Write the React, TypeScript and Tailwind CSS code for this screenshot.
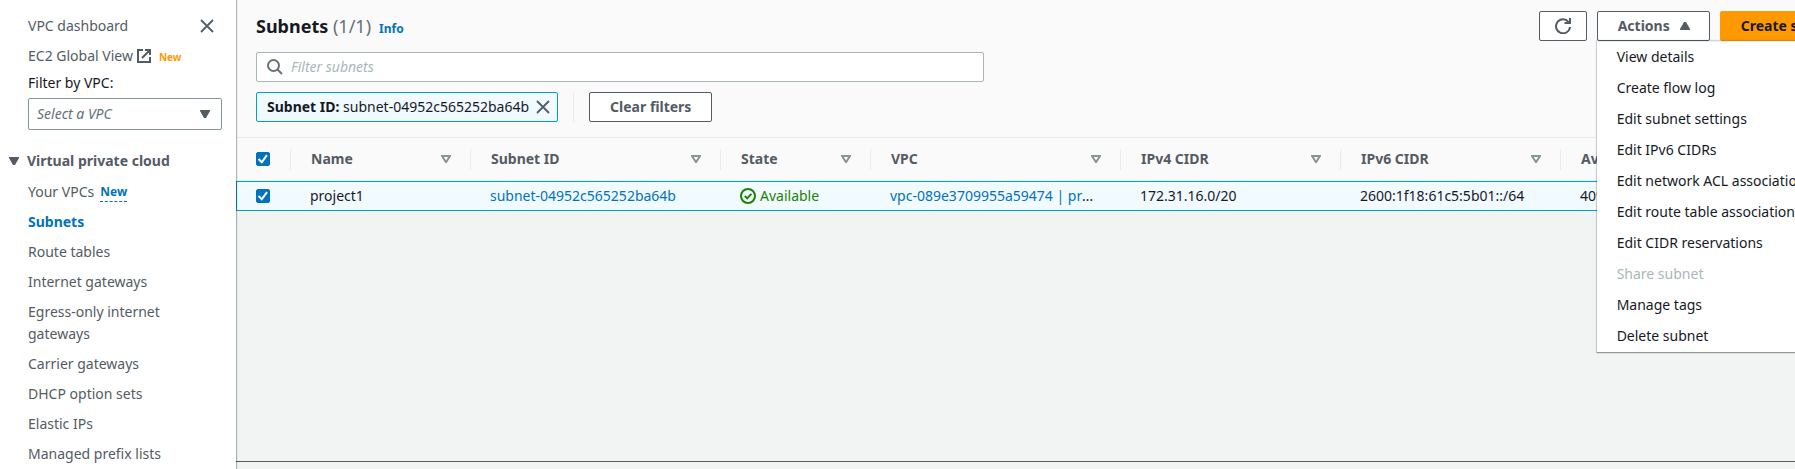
import React from "react";

const NAV = [
  "Route tables",
  "Internet gateways",
  "Egress-only internet gateways",
  "Carrier gateways",
  "DHCP option sets",
  "Elastic IPs",
  "Managed prefix lists",
];

const ACTIONS = [
  { label: "View details" },
  { label: "Create flow log" },
  { label: "Edit subnet settings" },
  { label: "Edit IPv6 CIDRs" },
  { label: "Edit network ACL association" },
  { label: "Edit route table association" },
  { label: "Edit CIDR reservations" },
  { label: "Share subnet", disabled: true },
  { label: "Manage tags" },
  { label: "Delete subnet" },
];

const COLUMNS = [
  { label: "Name", width: "w-[180px]" },
  { label: "Subnet ID", width: "w-[250px]" },
  { label: "State", width: "w-[150px]" },
  { label: "VPC", width: "w-[250px]" },
  { label: "IPv4 CIDR", width: "w-[220px]" },
  { label: "IPv6 CIDR", width: "w-[220px]" },
  { label: "Available IPv4 addresses", width: "w-auto" },
];

function CloseIcon() {
  return (
    <svg viewBox="0 0 14 14" className="size-3.5" fill="none" stroke="#545b64" strokeWidth="1.8" aria-hidden="true">
      <path d="M1 1l12 12M13 1L1 13" />
    </svg>
  );
}

function CaretDown() {
  return (
    <svg viewBox="0 0 10 8" className="h-2 w-2.5 shrink-0" aria-hidden="true">
      <path d="M0 0h10v1L6 8H4L0 1z" fill="#545b64" />
    </svg>
  );
}

function SortIcon() {
  return (
    <svg viewBox="0 0 10 8" className="h-2 w-2.5 shrink-0" aria-hidden="true">
      <path d="M1 1h8L5 7.2z" fill="none" stroke="#879596" strokeWidth="2" />
    </svg>
  );
}

function Checkbox({ label }: { label: string }) {
  return (
    <label className="grid size-3.5 cursor-pointer">
      <input
        type="checkbox"
        defaultChecked
        aria-label={label}
        className="peer col-start-1 row-start-1 size-3.5 appearance-none rounded-xs border border-[#687078] bg-white checked:border-[#0073bb] checked:bg-[#0073bb]"
      />
      <svg
        viewBox="0 0 14 14"
        className="pointer-events-none invisible col-start-1 row-start-1 size-3.5 peer-checked:visible"
        fill="none"
        stroke="#fff"
        strokeWidth="2"
        aria-hidden="true"
      >
        <path d="M2.5 7l3.3 3.2L11 3.2" />
      </svg>
    </label>
  );
}

function Sidebar() {
  return (
    <nav
      aria-label="VPC"
      className="z-10 w-[236px] shrink-0 overflow-hidden bg-white pr-3.5 pl-7 leading-[22px] text-[#545b64] shadow-[1px_0_1px_0_rgba(0,28,36,0.3)]"
    >
      <div className="flex items-center justify-between pt-[15px] pr-2">
        <a href="#dashboard">VPC dashboard</a>
        <button type="button" aria-label="Close navigation">
          <CloseIcon />
        </button>
      </div>
      <a href="#global" className="mt-[7px] flex items-center">
        EC2 Global View
        <svg viewBox="0 0 14 14" className="ml-1 size-3.5" fill="none" stroke="#545b64" strokeWidth="2" aria-hidden="true">
          <path d="M6 1H1v12h12V8M8 1h5v5M13 1L5 9" />
        </svg>
        <span className="ml-2 pt-0.5 text-[10px] font-bold text-[#ff9900]">New</span>
      </a>
      <label htmlFor="vpc-filter" className="mt-1 block text-[#16191f]">
        Filter by VPC:
      </label>
      <div className="mt-1 grid items-center">
        <select
          id="vpc-filter"
          className="col-start-1 row-start-1 h-8 w-full appearance-none rounded-xs border border-[#879596] bg-white px-2 text-[#687078] italic"
        >
          <option>Select a VPC</option>
        </select>
        <span className="pointer-events-none col-start-1 row-start-1 mr-3 justify-self-end">
          <CaretDown />
        </span>
      </div>
      <button type="button" aria-expanded="true" className="mt-5 -ml-[19px] flex items-center gap-2 font-bold">
        <CaretDown />
        Virtual private cloud
      </button>
      <ul className="mt-[9px] space-y-2">
        <li className="flex items-center gap-1.5">
          <a href="#vpcs">Your VPCs</a>
          <button type="button" className="border-b border-dashed border-[#0073bb] text-xs leading-[18px] font-bold text-[#0073bb]">
            New
          </button>
        </li>
        <li>
          <a href="#subnets" aria-current="page" className="font-bold text-[#0073bb]">
            Subnets
          </a>
        </li>
        {NAV.map((item) => (
          <li key={item} className="pr-10">
            <a href="#nav" className="block">{item}</a>
          </li>
        ))}
      </ul>
    </nav>
  );
}

function ActionsMenu() {
  return (
    <div className="relative">
      <button
        type="button"
        aria-expanded="true"
        className="flex h-[30px] items-center gap-2.5 rounded-xs border border-[#545b64] bg-white pr-[19px] pl-5 font-bold text-[#545b64]"
      >
        Actions
        <svg viewBox="0 0 10 8" className="h-2 w-2.5" aria-hidden="true">
          <path d="M0 8h10V7L6 0H4L0 7z" fill="#545b64" />
        </svg>
      </button>
      <ul
        role="menu"
        className="absolute top-full left-0 z-20 w-max border-t border-[#eaeded] bg-white shadow-[0_1px_1px_0_rgba(0,28,36,0.3),0_0_1px_1px_rgba(0,28,36,0.15)]"
      >
        {ACTIONS.map((a) => (
          <li key={a.label} role="none">
            <button
              type="button"
              role="menuitem"
              disabled={a.disabled}
              className="block h-[31px] w-full px-5 pb-0.5 text-left text-[#16191f] disabled:text-[#aab7b8]"
            >
              {a.label}
            </button>
          </li>
        ))}
      </ul>
    </div>
  );
}

function Header() {
  return (
    <header className="bg-[#fafafa] px-5 pt-[11px] pb-[15px]">
      <div className="flex items-center justify-between">
        <div className="flex items-baseline">
          <h1 className="text-lg leading-[30px] font-bold text-[#16191f]">
            Subnets <span className="font-normal text-[#687078]">(1/1)</span>
          </h1>
          <a href="#info" className="ml-2 text-xs font-bold text-[#0073bb]">
            Info
          </a>
        </div>
        <div className="flex gap-2.5">
          <button
            type="button"
            aria-label="Refresh"
            className="flex h-[30px] w-12 items-center justify-center rounded-xs border border-[#545b64] bg-white"
          >
            <svg viewBox="0 0 16 16" className="size-4" fill="none" stroke="#545b64" strokeWidth="2" aria-hidden="true">
              <path d="M15 9A7 7 0 1 1 13.4 3.8L15 5.2M15 0v5H9.5" />
            </svg>
          </button>
          <ActionsMenu />
          <button type="button" className="h-[30px] rounded-xs bg-[#ff9900] px-[21px] font-bold text-[#16191f]">
            Create subnet
          </button>
        </div>
      </div>
      <div className="mt-[11px] flex h-[30px] max-w-[728px] items-center rounded-xs border border-[#aab7b8] bg-white px-2.5">
        <svg viewBox="0 0 16 16" className="size-4 shrink-0" fill="none" stroke="#687078" strokeWidth="2" aria-hidden="true">
          <circle cx="6.5" cy="6.5" r="5.5" />
          <path d="M10.5 10.5L15 15" />
        </svg>
        <input
          type="search"
          aria-label="Filter subnets"
          placeholder="Filter subnets"
          className="ml-2 flex-1 bg-transparent outline-none placeholder:text-[#aab7b8] placeholder:italic"
        />
      </div>
      <div className="mt-2.5 flex h-[30px]">
        <div className="flex items-center rounded-xs border border-[#00a1c9] bg-[#f1faff] pr-[7px] pl-2.5 text-[#16191f]">
          <span>
            <b>Subnet ID:</b> subnet-04952c565252ba64b
          </span>
          <button type="button" aria-label="Remove filter" className="ml-[7px]">
            <CloseIcon />
          </button>
        </div>
        <div className="ml-[15px] border-l border-[#eaeded] pl-[15px]">
          <button
            type="button"
            className="h-[30px] rounded-xs border border-[#545b64] bg-white px-5 font-bold text-[#545b64]"
          >
            Clear filters
          </button>
        </div>
      </div>
    </header>
  );
}

function SubnetTable() {
  const cell = "truncate border-y border-[#00a1c9] px-5";
  return (
    <table className="w-full table-fixed border-separate border-spacing-0 text-left">
      <thead>
        <tr className="h-[44px] bg-[#fafafa]">
          <th className="w-[54px] border-y border-[#eaeded] pl-5">
            <Checkbox label="Select all subnets" />
          </th>
          {COLUMNS.map((c) => (
            <th key={c.label} scope="col" className={`${c.width} border-y border-[#eaeded] font-bold text-[#545b64]`}>
              <div className="flex h-[21px] items-center justify-between border-l border-[#eaeded] pr-[19px] pl-5">
                {c.label}
                <SortIcon />
              </div>
            </th>
          ))}
        </tr>
      </thead>
      <tbody>
        <tr className="h-[30px] bg-[#f1faff] text-[#16191f]">
          <td className="border border-r-0 border-[#00a1c9] pl-[19px]">
            <Checkbox label="Select project1" />
          </td>
          <td className={cell}>project1</td>
          <td className={cell}>
            <a href="#subnet" className="text-[#0073bb]">subnet-04952c565252ba64b</a>
          </td>
          <td className={cell}>
            <span className="flex items-center gap-1 text-[#1d8102]">
              <svg viewBox="0 0 16 16" className="size-4" fill="none" stroke="#1d8102" strokeWidth="2" aria-hidden="true">
                <circle cx="8" cy="8" r="7" />
                <path d="M4.8 8l2.4 2.4 4.2-4.6" />
              </svg>
              Available
            </span>
          </td>
          <td className={cell}>
            <a href="#vpc" className="text-[#0073bb]">vpc-089e3709955a59474 | project-vpc</a>
          </td>
          <td className={cell}>172.31.16.0/20</td>
          <td className={cell}>2600:1f18:61c5:5b01::/64</td>
          <td className={cell}>4090</td>
        </tr>
      </tbody>
    </table>
  );
}

export default function App() {
  return (
    <div className="h-screen overflow-hidden bg-[#f2f3f3] font-['Noto_Sans',sans-serif] text-sm">
      <div className="flex h-full min-w-[1880px]">
        <Sidebar />
        <div className="flex flex-1 flex-col">
          <main className="flex-1">
            <Header />
            <SubnetTable />
          </main>
          <footer className="h-2 border-t border-[#545b64]" />
        </div>
      </div>
    </div>
  );
}
